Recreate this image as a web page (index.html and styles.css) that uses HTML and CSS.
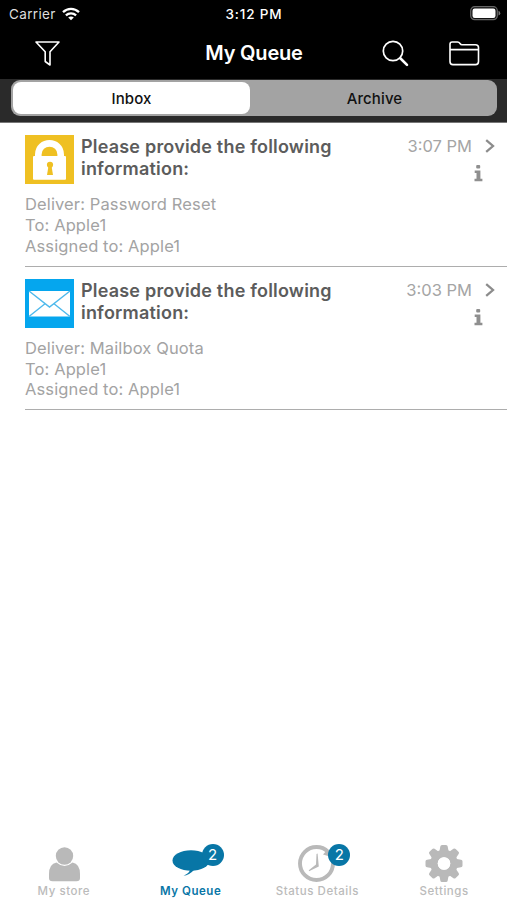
FILE: index.html
```html
<!DOCTYPE html>
<html lang="en">
<head>
<meta charset="utf-8">
<title>My Queue</title>
<link rel="stylesheet" href="styles.css">
</head>
<body>
<div class="app">
  <header class="top">
    <div class="status">
      <div class="carrier"><span>Carrier</span>
        <svg width="18" height="14" viewBox="0 0 18 14" fill="none" stroke="#fff" stroke-width="2.3"><path d="M1 5.2C5.6.8 12.400.8 17 5.200M3.900 8.300C6.800 5.600 11.200 5.600 14.100 8.300"/><path d="M9 13.300 6.200 10.500C7.800 9.100 10.200 9.100 11.800 10.500Z" fill="#fff" stroke="none"/></svg>
      </div>
      <div class="clock">3:12 PM</div>
      <svg class="battery" width="31" height="15" viewBox="0 0 31 15"><rect x=".7" y=".7" width="26.600" height="13" rx="4" fill="#111" stroke="#666" stroke-width="1.200"/><rect x="2.500" y="2.500" width="23" height="9.500" rx="2.200" fill="#fff"/><path d="M28.500 4.800Q30.300 5.500 30.300 7.200T28.500 9.600Z" fill="#777"/></svg>
    </div>
    <div class="nav">
      <svg width="25" height="25" viewBox="0 0 25 25" fill="none" stroke="#fff" stroke-width="1.600" stroke-linejoin="round"><path d="M1 1H24L15 10.800V24L10.200 20.500V10.800Z"/></svg>
      <h1>My Queue</h1>
      <div class="actions">
        <svg width="27" height="27" viewBox="0 0 27 27" fill="none" stroke="#fff" stroke-linecap="round"><circle cx="11" cy="11" r="9.700" stroke-width="1.700"/><path d="M18.300 18.300 25 24.900" stroke-width="2.600"/></svg>
        <svg width="31" height="25" viewBox="0 0 31 25" fill="none" stroke="#fff" stroke-width="1.600" stroke-linejoin="round"><path d="M1 8V3.200Q1 1 3.200 1H8.500Q10 1 11 2.500T13.500 3.700H26.500Q29.500 3.700 29.500 6.500V20.500Q29.500 23.600 26.500 23.600H4Q1 23.600 1 20.500ZM1 8.600H29.500"/></svg>
      </div>
    </div>
  </header>
  <div class="segment-bar"><div class="segments"><div class="segment selected"><span>Inbox</span></div><div class="segment"><span>Archive</span></div></div></div>
  <main>
    <article class="item">
      <div class="item-head">
        <svg width="49" height="49" viewBox="0 0 49 49"><path fill="#efc022" d="M0 0H49V49H0Z"/><path d="M13.300 21V19.500C13.300 4.700 35.700 4.700 35.700 19.500V21" fill="none" stroke="#fff" stroke-width="6.600"/><rect x="8" y="21" width="33" height="23.700" rx="1" fill="#fff"/><circle cx="25" cy="29.800" r="3.100" fill="#efc022"/><path fill="#efc022" d="M23.500 31H26.500L28 40H22Z"/></svg>
        <h2><span>Please provide the following</span><br><span>information:</span></h2>
        <div class="side"><div class="when"><time>3:07 PM</time><svg width="10" height="14" viewBox="0 0 10 14" fill="none" stroke="#8c8c8c" stroke-width="2.300"><path d="M1.200 1.200 8 7 1.200 12.800"/></svg></div>
        <svg class="info" width="9" height="17" viewBox="0 0 9 17" fill="#8f8f8f"><rect x="2.200" width="4" height="3.600" rx="1"/><path d="M.7 5.500H6.400V13.800H8.400V16.300H.5V13.800H2.500V8H.7Z"/></svg></div>
      </div>
      <div class="meta"><div>Deliver: Password Reset</div><div>To: Apple1</div><div>Assigned to: Apple1</div></div>
    </article>
    <article class="item">
      <div class="item-head">
        <svg width="49" height="49" viewBox="0 0 49 49"><path fill="#05a6ee" d="M0 0H49V49H0Z"/><path fill="#fff" d="M4 12H45V37.500H4Z"/><path d="M4 12 24.500 28 45 12M4 37.500 20 24.700M45 37.500 29 24.700" fill="none" stroke="#4eb9ec" stroke-width="1.400"/></svg>
        <h2><span>Please provide the following</span><br><span>information:</span></h2>
        <div class="side"><div class="when"><time>3:03 PM</time><svg width="10" height="14" viewBox="0 0 10 14" fill="none" stroke="#8c8c8c" stroke-width="2.300"><path d="M1.200 1.200 8 7 1.200 12.800"/></svg></div>
        <svg class="info" width="9" height="17" viewBox="0 0 9 17" fill="#8f8f8f"><rect x="2.200" width="4" height="3.600" rx="1"/><path d="M.7 5.500H6.400V13.800H8.400V16.300H.5V13.800H2.500V8H.7Z"/></svg></div>
      </div>
      <div class="meta"><div>Deliver: Mailbox Quota</div><div>To: Apple1</div><div>Assigned to: Apple1</div></div>
    </article>
  </main>
  <nav class="tabs">
    <div class="tab"><div class="tab-icon"><svg width="40" height="40" viewBox="0 0 40 40" fill="#b9b9b9"><circle cx="20.500" cy="12" r="8.700"/><path d="M12.500 18.500Q20.500 25.500 28.500 18.500Q36 20 36 30V34Q36 37.300 32.500 37.300H8.500Q5 37.300 5 34V30Q5 20 12.500 18.500Z"/></svg></div><span>My store</span></div>
    <div class="tab active"><div class="tab-icon"><svg width="40" height="40" viewBox="0 0 40 40" fill="#0876a6"><ellipse cx="20" cy="16.500" rx="18.500" ry="10.300"/><path d="M19 25Q19 29 12.500 31.700Q18 31.500 24 25Z"/></svg><span class="badge">2</span></div><span>My Queue</span></div>
    <div class="tab"><div class="tab-icon"><svg width="40" height="40" viewBox="0 0 40 40"><circle cx="19.500" cy="19.500" r="16.500" fill="none" stroke="#b9b9b9" stroke-width="3.900"/><path d="M26 10.500 31 5 31 12Z" fill="#b9b9b9"/><path d="M19.500 10 20.600 9.500 21.800 22.500 12 27.300 11.800 26.300 19 20.500Z" fill="#b9b9b9"/></svg><span class="badge">2</span></div><span>Status Details</span></div>
    <div class="tab"><div class="tab-icon"><svg width="40" height="40" viewBox="-20 -19.500 40 40" fill="#b9b9b9"><defs><path id="tooth" d="M-5-10 -3.700-17Q-3.500-18.500-2-18.500H2Q3.500-18.500 3.700-17L5-10Z"/></defs><use href="#tooth"/><use href="#tooth" transform="rotate(45)"/><use href="#tooth" transform="rotate(90)"/><use href="#tooth" transform="rotate(135)"/><use href="#tooth" transform="rotate(180)"/><use href="#tooth" transform="rotate(225)"/><use href="#tooth" transform="rotate(270)"/><use href="#tooth" transform="rotate(315)"/><circle r="10" fill="none" stroke="#b9b9b9" stroke-width="7.500"/><circle r="6.300" fill="#fff"/></svg></div><span>Settings</span></div>
  </nav>
</div>
</body>
</html>
```

FILE: styles.css
```css
* { box-sizing: border-box; }
body { margin: 0; font-family: Inter, "Liberation Sans", sans-serif; background: #fff; }
svg { display: block; flex: none; }
span, time, h1 { white-space: nowrap; }
.app { width: 507px; height: 900px; display: flex; flex-direction: column; overflow: hidden; }
.top { height: 79px; background: #000; color: #fff; }
.status { height: 27px; display: grid; grid-template-columns: 1fr auto 1fr; align-items: center; padding: 0 6px 0 9px; }
.carrier { display: flex; align-items: center; gap: 6px; font-size: 13.5px; letter-spacing: .35px; color: #ddd; }
.clock { font-size: 13.5px; font-weight: 500; letter-spacing: .85px; margin-right: 2px; }
.battery { justify-self: end; }
.nav { height: 52px; display: grid; grid-template-columns: 1fr auto 1fr; align-items: center; padding: 0 27px 0 35px; }
h1 { margin: 0 7px 0 0; font-size: 20px; font-weight: 600; letter-spacing: -.2px; }
.actions { display: flex; justify-content: flex-end; align-items: center; gap: 40px; }
.segment-bar { height: 44px; background: #2a2a2a; padding: 1px 10px 7px 11px; border-bottom: 1px solid #777; }
.segments { height: 36px; background: #a3a3a3; border-radius: 9px; display: grid; grid-template-columns: 241px 1fr; padding: 2px; }
.segment { display: flex; align-items: center; justify-content: center; font-size: 15px; font-weight: 500; letter-spacing: .1px; color: #111; }
.selected { width: 237px; background: #fff; border-radius: 8px; }
main { flex: 1; padding-top: .4px; }
.item { margin-left: 25px; height: 143.4px; padding-top: 12px; border-bottom: 1px solid #adadad; }
.item-head { display: flex; }
h2 { margin: 1px 0 0 7px; font-size: 18px; line-height: 22px; font-weight: 600; letter-spacing: .2px; color: #5c5c5c; }
.side { margin-left: auto; padding-right: 12px; }
.when { display: flex; align-items: center; gap: 13px; height: 22px; font-size: 16.5px; color: #a5a5a5; }
.info { margin: 8px 0 0 auto; position: relative; right: 12px; }
.meta { margin-top: 10px; font-size: 16.5px; line-height: 20.8px; letter-spacing: .12px; color: #a3a3a3; }
.tabs { height: 60px; display: grid; grid-template-columns: repeat(4, 1fr); }
.tab { display: flex; flex-direction: column; align-items: center; font-size: 11.5px; line-height: 14px; font-weight: 500; color: #bbb; letter-spacing: .55px; padding: 4px 0 0 1px; }
.tab-icon { position: relative; height: 40px; }
.active { color: #0876a6; font-weight: 600; }
.badge { position: absolute; left: 31px; top: 0; width: 22px; height: 22px; border-radius: 50%; background: #0876a6; color: #fff; font-size: 15px; line-height: 22px; font-weight: 400; text-align: center; letter-spacing: 0; }
```
